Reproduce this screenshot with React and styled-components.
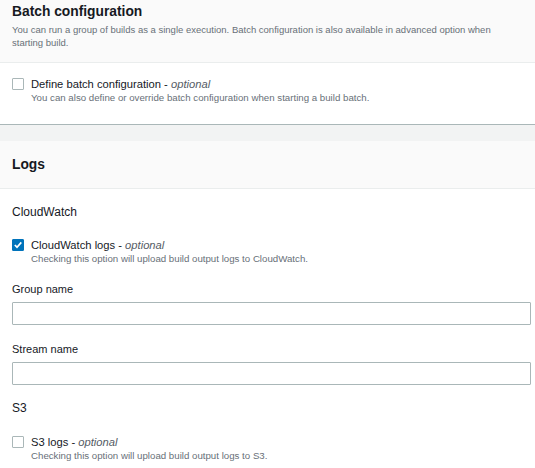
import styled, { createGlobalStyle } from 'styled-components';

const GlobalStyle = createGlobalStyle`
    html, body {
        margin: 0;
        padding: 0;
        background: #ffffff;
    }

    body {
        font-family: 'Liberation Sans', Arial, sans-serif;
        color: #16191f;
    }
`;

const Page = styled.div`
    width: 535px;
    height: 468px;
    overflow: hidden;
    background: #f2f3f3;
`;

const Panel = styled.div`
    background: #ffffff;
    border-bottom: ${(props) => (props.shadowed ? '1px solid #aab7b8' : 'none')};
`;

const PanelHeader = styled.div`
    background: #fafafa;
    border-bottom: 1px solid #eaeded;
    padding: ${(props) => props.padding || '3px 12px 13px'};

    .panel-title{
        margin: 0;
        font-size: 13.8px;
        font-weight: 700;
        line-height: 18px;
        color: #16191f;
    }

    .panel-desc{
        margin-top: 2px;
        font-size: 9.5px;
        line-height: 13px;
        color: #687078;
    }
`;

const PanelBody = styled.div`
    padding: ${(props) => props.padding || '16px 12px'};
`;

const Gap = styled.div`
    height: 16px;
    background: #f2f3f3;
`;

const SubHeading = styled.div`
    font-size: 12px;
    line-height: 16px;
    color: #16191f;
    margin-bottom: ${(props) => props.spacing || '18px'};
`;

const CheckRow = styled.label`
    display: flex;
    align-items: flex-start;
    gap: 7px;
    margin-bottom: ${(props) => props.spacing || '0'};

    .check-text{
        display: flex;
        flex-direction: column;
    }

    .check-label{
        font-size: 11.2px;
        line-height: 14px;
        color: #16191f;
    }

    .check-label i{
        color: #545b64;
    }

    .check-desc{
        font-size: 9.7px;
        line-height: 13px;
        color: #687078;
    }
`;

const CheckBox = styled.span`
    flex: none;
    box-sizing: border-box;
    width: 12px;
    height: 12px;
    margin-top: 1px;
    border: 1px solid ${(props) => (props.checked ? '#0073bb' : '#aab7b8')};
    background: ${(props) => (props.checked ? '#0073bb' : '#ffffff')};
    border-radius: 1px;
    display: flex;
    align-items: center;
    justify-content: center;
`;

const Field = styled.div`
    margin-bottom: ${(props) => props.spacing || '17px'};

    .field-label{
        font-size: 11px;
        line-height: 14px;
        color: #16191f;
        margin-bottom: 6px;
    }

    .field-input{
        display: block;
        box-sizing: border-box;
        width: 519px;
        height: 23px;
        border: 1px solid #aab7b8;
        border-radius: 1px;
        background: #ffffff;
        outline: none;
        padding: 0 8px;
        font-family: inherit;
        font-size: 11px;
    }
`;

const Check = ({ checked, title, desc, spacing }) => (
    <CheckRow spacing={spacing}>
        <CheckBox checked={checked}>
            {checked && (
                <svg width='10' height='10' viewBox='0 0 10 10'>
                    <path d='M1.8 5 L4 7.2 L8.3 2.4' fill='none' stroke='#ffffff' strokeWidth='1.7' />
                </svg>
            )}
        </CheckBox>
        <span className='check-text'>
            <span className='check-label'>{title} - <i>optional</i></span>
            <span className='check-desc'>{desc}</span>
        </span>
    </CheckRow>
);

const App = () => {
    return (
        <>
            <GlobalStyle />
            <Page>
                <Panel shadowed>
                    <PanelHeader>
                        <h2 className='panel-title'>Batch configuration</h2>
                        <div className='panel-desc'>
                            You can run a group of builds as a single execution. Batch configuration is also available in advanced option when starting build.
                        </div>
                    </PanelHeader>
                    <PanelBody padding='14px 12px 20px'>
                        <Check
                            title='Define batch configuration'
                            desc='You can also define or override batch configuration when starting a build batch.'
                        />
                    </PanelBody>
                </Panel>
                <Gap />
                <Panel>
                    <PanelHeader padding='15px 12px 14px'>
                        <h2 className='panel-title'>Logs</h2>
                    </PanelHeader>
                    <PanelBody padding='15px 12px'>
                        <SubHeading>CloudWatch</SubHeading>
                        <Check
                            checked
                            spacing='17px'
                            title='CloudWatch logs'
                            desc='Checking this option will upload build output logs to CloudWatch.'
                        />
                        <Field>
                            <div className='field-label'>Group name</div>
                            <input className='field-input' type='text' />
                        </Field>
                        <Field spacing='15px'>
                            <div className='field-label'>Stream name</div>
                            <input className='field-input' type='text' />
                        </Field>
                        <SubHeading spacing='19px'>S3</SubHeading>
                        <Check
                            title='S3 logs'
                            desc='Checking this option will upload build output logs to S3.'
                        />
                    </PanelBody>
                </Panel>
            </Page>
        </>
    );
}
export default App;
